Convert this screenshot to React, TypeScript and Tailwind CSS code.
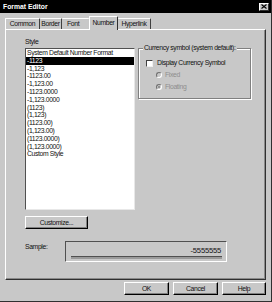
import React from "react";

const rows = [
  "System Default Number Format",
  "-1123",
  "-1,123",
  "-1123.00",
  "-1,123.00",
  "-1123.0000",
  "-1,123.0000",
  "(1123)",
  "(1,123)",
  "(1123.00)",
  "(1,123.00)",
  "(1123.0000)",
  "(1,123.0000)",
  "Custom Style",
];

function Btn({ label, w }: { label: string; w: string }) {
  return (
    <div
      className={`${w} h-[13px] flex items-center justify-center bg-[#c8c8c8] border-t border-l border-white border-r border-b border-r-black border-b-black shadow-[inset_-1px_-1px_0_#808080]`}
    >
      {label}
    </div>
  );
}

export default function App() {
  return (
    <div className="w-[272px] h-[302px] bg-[#c8c8c8] flex flex-col border-r border-b border-r-[#303030] border-b-[#303030] [font-family:'Liberation_Sans',Arial,sans-serif] text-[#111] text-[6.8px] tracking-[-0.35px] leading-[8px] overflow-hidden">
      {/* Title bar */}
      <div className="h-[13px] bg-black flex items-center justify-between pl-[3px] pr-[2px] shrink-0">
        <span className="text-white font-bold text-[6.8px] tracking-normal">Format Editor</span>
        <div className="w-[10px] h-[8px] bg-[#c8c8c8] border-t border-l border-white border-r border-b border-r-[#303030] border-b-[#303030] flex items-center justify-center">
          <svg width="6" height="5" viewBox="0 0 6 5">
            <path d="M0.5 0.5 L5.5 4.5 M5.5 0.5 L0.5 4.5" stroke="black" strokeWidth="1.1" />
          </svg>
        </div>
      </div>

      {/* Tabs */}
      <div className="h-[16px] flex items-end pl-[5px] shrink-0">
        <div className="w-[35px] h-[11px] flex items-center justify-center border-t border-l border-white border-r border-r-[#404040] rounded-t-[1px]">
          Common
        </div>
        <div className="w-[22px] h-[11px] flex items-center justify-center border-t border-white border-r border-r-[#404040] rounded-t-[1px]">
          Border
        </div>
        <div className="w-[27px] h-[11px] flex items-center pl-[5px] border-t border-white rounded-t-[1px]">
          Font
        </div>
        <div className="relative z-10 w-[29px] h-[14px] -mb-[1px] pb-[2px] flex items-center justify-center bg-[#c8c8c8] border-t border-l border-white border-r border-r-[#303030] rounded-t-[1px]">
          Number
        </div>
        <div className="w-[33px] h-[11px] flex items-center justify-center border-t border-white border-r border-r-[#404040] rounded-t-[1px]">
          Hyperlink
        </div>
      </div>

      {/* Panel */}
      <div className="ml-[5px] w-[261px] h-[251px] shrink-0 flex flex-col border-t border-l border-white border-r border-b border-r-[#303030] border-b-[#303030] shadow-[inset_-1px_-1px_0_#8a8a8a] pl-[19px]">
        <div className="flex">
          {/* Left column */}
          <div className="w-[110px] flex flex-col">
            <div className="mt-[8px] h-[8px]">Style</div>
            <div className="mt-[2px] h-[162px] bg-white border-t border-l border-[#505050] border-r border-b border-r-[#e8e8e8] border-b-[#e8e8e8] flex flex-col overflow-hidden">
              {rows.map((r, i) => (
                <div
                  key={r}
                  className={`h-[7.8px] leading-[7.8px] pl-[1px] whitespace-nowrap ${
                    i === 1 ? "bg-black text-white" : ""
                  }`}
                >
                  {r}
                </div>
              ))}
            </div>
            <div className="mt-[6px]">
              <Btn label="Customize..." w="w-[63px]" />
            </div>
          </div>

          {/* Currency group */}
          <div className="relative ml-[3px] mt-[18px] w-[113px] h-[51px] border border-[#808080] shadow-[1px_1px_0_#fff,inset_1px_1px_0_#fff] pl-[7px] pt-[10px] flex flex-col">
            <span className="absolute left-[4px] -top-[5px] px-[1px] bg-[#c8c8c8] whitespace-nowrap">
              Currency symbol (system default):
            </span>
            <div className="h-[8px] flex items-center">
              <div className="w-[7px] h-[7px] bg-white border-t border-l border-[#404040] border-r border-b border-r-[#f0f0f0] border-b-[#f0f0f0]" />
              <span className="ml-[4px]">Display Currency Symbol</span>
            </div>
            <div className="mt-[4px] ml-[10px] h-[8px] flex items-center text-[#8e8e8e]">
              <div className="w-[6px] h-[6px] rounded-full border border-t-[#707070] border-l-[#707070] border-r-white border-b-white bg-[#c8c8c8]" />
              <span className="ml-[3px]">Fixed</span>
            </div>
            <div className="mt-[4px] ml-[10px] h-[8px] flex items-center text-[#8e8e8e]">
              <div className="w-[6px] h-[6px] rounded-full border border-t-[#707070] border-l-[#707070] border-r-white border-b-white bg-[#c8c8c8] flex items-center justify-center">
                <div className="w-[2px] h-[2px] rounded-full bg-[#808080]" />
              </div>
              <span className="ml-[3px]">Floating</span>
            </div>
          </div>
        </div>

        {/* Sample */}
        <div className="mt-[12px] flex items-start">
          <div className="w-[40px] mt-[2px]">Sample:</div>
          <div className="w-[162px] h-[21px] border-t border-l border-[#505050] border-r border-b border-r-white border-b-white flex flex-col">
            <div className="mt-[5px] h-[8px] text-right pr-[5px] text-[7.6px] tracking-[-0.2px]">-5555555</div>
            <div className="mt-[1px] ml-[5px] mr-[4px] h-[3px] bg-[#9a9a9a] border-t border-[#505050]" />
          </div>
        </div>
      </div>

      {/* Buttons */}
      <div className="mt-[2px] flex justify-end gap-[4px] pr-[5px]">
        <Btn label="OK" w="w-[45px]" />
        <Btn label="Cancel" w="w-[45px]" />
        <Btn label="Help" w="w-[44px]" />
      </div>
    </div>
  );
}
